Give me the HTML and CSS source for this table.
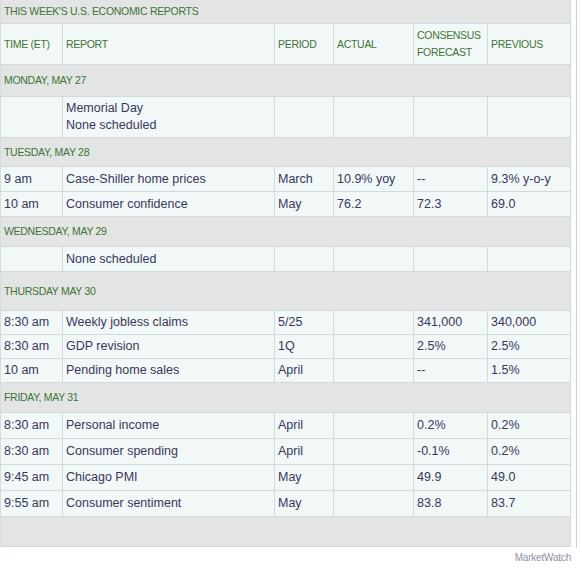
FILE: index.html
```html
<!DOCTYPE html>
<html>
<head>
<meta charset="utf-8">
<link rel="stylesheet" href="styles.css">
</head>
<body>
<div class="wrap">
<table class="econ">
  <colgroup>
    <col class="c1"><col class="c2"><col class="c3"><col class="c4"><col class="c5"><col class="c6">
  </colgroup>
  <tr class="title h24"><td colspan="6">THIS WEEK'S U.S. ECONOMIC REPORTS</td></tr>
  <tr class="head h41">
    <td>TIME (ET)</td><td>REPORT</td><td>PERIOD</td><td>ACTUAL</td><td>CONSENSUS<br>FORECAST</td><td>PREVIOUS</td>
  </tr>
  <tr class="day h32"><td colspan="6">MONDAY, MAY 27</td></tr>
  <tr class="h41"><td></td><td>Memorial Day<br>None scheduled</td><td></td><td></td><td></td><td></td></tr>
  <tr class="day h29"><td colspan="6">TUESDAY, MAY 28</td></tr>
  <tr class="h25"><td>9 am</td><td>Case-Shiller home prices</td><td>March</td><td>10.9% yoy</td><td>--</td><td>9.3% y-o-y</td></tr>
  <tr class="h25"><td>10 am</td><td>Consumer confidence</td><td>May</td><td>76.2</td><td>72.3</td><td>69.0</td></tr>
  <tr class="day h30"><td colspan="6">WEDNESDAY, MAY 29</td></tr>
  <tr class="h25"><td></td><td>None scheduled</td><td></td><td></td><td></td><td></td></tr>
  <tr class="day h39"><td colspan="6">THURSDAY MAY 30</td></tr>
  <tr class="h24"><td>8:30 am</td><td>Weekly jobless claims</td><td>5/25</td><td></td><td>341,000</td><td>340,000</td></tr>
  <tr class="h24"><td>8:30 am</td><td>GDP revision</td><td>1Q</td><td></td><td>2.5%</td><td>2.5%</td></tr>
  <tr class="h24"><td>10 am</td><td>Pending home sales</td><td>April</td><td></td><td>--</td><td>1.5%</td></tr>
  <tr class="day h30"><td colspan="6">FRIDAY, MAY 31</td></tr>
  <tr class="h26"><td>8:30 am</td><td>Personal income</td><td>April</td><td></td><td>0.2%</td><td>0.2%</td></tr>
  <tr class="h26"><td>8:30 am</td><td>Consumer spending</td><td>April</td><td></td><td>-0.1%</td><td>0.2%</td></tr>
  <tr class="h26"><td>9:45 am</td><td>Chicago PMI</td><td>May</td><td></td><td>49.9</td><td>49.0</td></tr>
  <tr class="h26"><td>9:55 am</td><td>Consumer sentiment</td><td>May</td><td></td><td>83.8</td><td>83.7</td></tr>
  <tr class="foot h30"><td colspan="6"></td></tr>
</table>
</div>
<div class="credit">MarketWatch</div>
</body>
</html>
```
FILE: styles.css
```css
html, body {
  margin: 0;
  padding: 0;
  background: #ffffff;
}
body {
  font-family: "Liberation Sans", Arial, sans-serif;
}
.wrap {
  width: 571px;
  padding-right: 5px;
  height: 548px;
  border-right: 1px solid #c9d3df;
}
.econ {
  table-layout: fixed;
  width: 571px;
  border-collapse: separate;
  border-spacing: 0;
  border-left: 1px solid #d4dcdf;
}
.c1 { width: 62px; }
.c2 { width: 212px; }
.c3 { width: 59px; }
.c4 { width: 80px; }
.c5 { width: 74px; }
.c6 { width: 83px; }
.econ td {
  padding: 0 3px;
  border-right: 1px solid #d0d9dc;
  border-bottom: 1px solid #d0d9dc;
  background: #f2f7f7;
  color: #38385c;
  font-size: 12.5px;
  line-height: 17px;
  vertical-align: middle;
  white-space: nowrap;
  overflow: hidden;
}
.econ .title td,
.econ .day td,
.econ .foot td {
  background: #e3e4e4;
}
.econ .title td,
.econ .day td,
.econ .head td {
  color: #3e7435;
  font-size: 10.5px;
  letter-spacing: -0.3px;
}
.h24 { height: 24px; }
.h25 { height: 25px; }
.h26 { height: 26px; }
.h29 { height: 29px; }
.h30 { height: 30px; }
.h32 { height: 32px; }
.h39 { height: 39px; }
.h41 { height: 41px; }
.credit {
  width: 571px;
  text-align: right;
  font-size: 10px;
  color: #8a92a2;
  padding-top: 4px;
  letter-spacing: -0.2px;
}
```
